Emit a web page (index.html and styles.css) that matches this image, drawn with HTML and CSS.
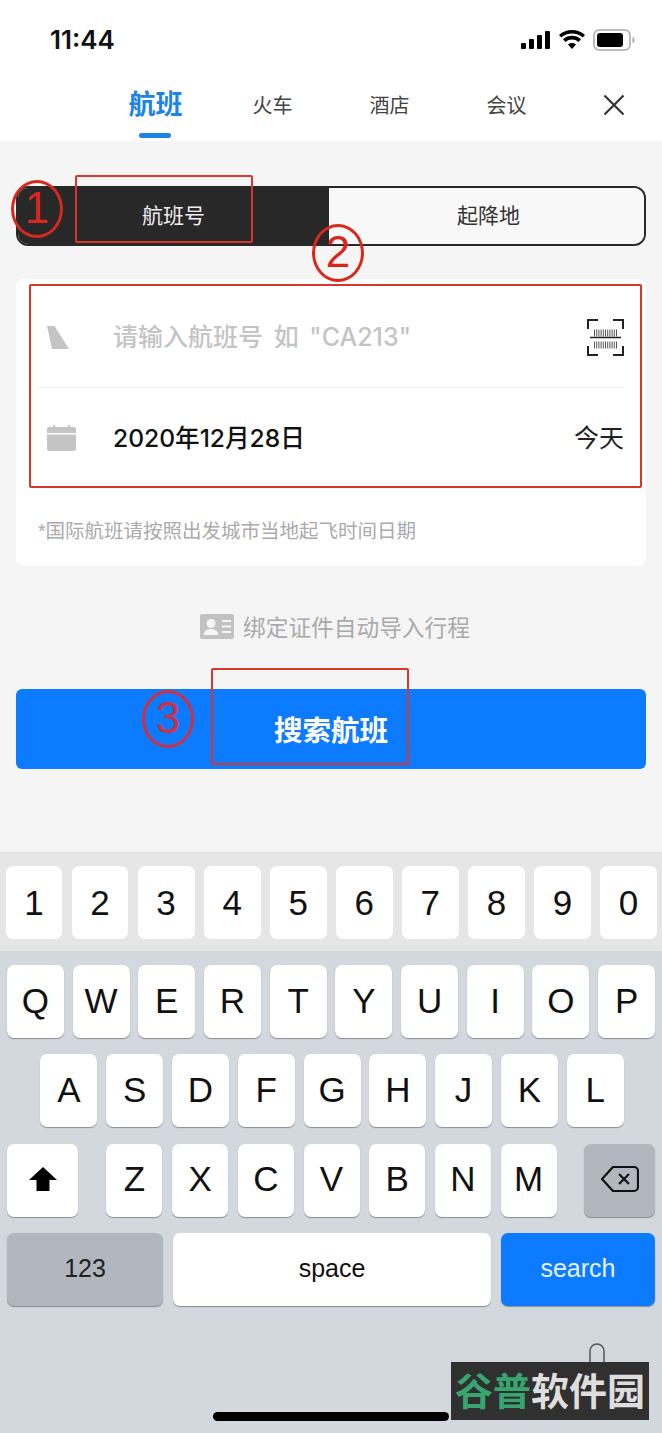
FILE: index.html
```html
<!DOCTYPE html>
<html>
	<head>
		<title>航班</title>
		<meta charset="utf-8">
		<meta name="viewport" content="width=device-width initial-scale=1">
		<link rel="stylesheet" href="styles.css">
	</head>
	<body>
		<div class="phone">
			<div class="statusBar">
				<span class="time">11:44</span>
				<div class="statusIcons">
					<svg width="30" height="20" viewBox="0 0 30 20"><rect x="0" y="13" width="5" height="6" rx="1"/><rect x="8" y="9" width="5" height="10" rx="1"/><rect x="16" y="5" width="5" height="14" rx="1"/><rect x="24" y="1" width="5" height="18" rx="1"/></svg>
					<svg width="26" height="20" viewBox="0 0 26 20"><path d="M13 19l-4-4.5c2.2-2 5.800-2 8 0zM6.500 12L4 9.300c5-4.600 13-4.600 18 0L19.500 12c-3.600-3.300-9.400-3.300-13 0zM2.300 7.500L0 5c7.200-6.600 18.800-6.600 26 0l-2.300 2.500C17.800 2.100 8.200 2.100 2.300 7.500z"/></svg>
					<svg width="42" height="22" viewBox="0 0 42 22"><rect x="1" y="1" width="36" height="20" rx="5" fill="none" stroke="#a8a8a8" stroke-width="1.500"/><rect x="4" y="4" width="26" height="14" rx="3"/><path d="M39.500 8v6c1.500-.5 2-1.500 2-3s-.5-2.500-2-3z" fill="#a8a8a8"/></svg>
				</div>
			</div>

			<div class="tabs">
				<div class="tab active">航班</div>
				<div class="tab">火车</div>
				<div class="tab">酒店</div>
				<div class="tab">会议</div>
				<svg class="closeIcon" width="22" height="22" viewBox="0 0 22 22"><path d="M1.500 1.500l19 19M20.500 1.500l-19 19" stroke="#333" stroke-width="2.200" fill="none"/></svg>
			</div>

			<div class="content">
				<div class="segment">
					<div class="segItem on">航班号</div>
					<div class="segItem">起降地</div>
				</div>

				<div class="card">
					<div class="row first">
						<svg class="rowIcon" width="24" height="24" viewBox="0 0 24 24"><path d="M0 1h7.500L22 24H5z" fill="#c4c4c4"/></svg>
						<span class="placeholder">请输入航班号 如 "CA213"</span>
						<svg class="scanIcon" width="37" height="37" viewBox="0 0 37 37">
							<path d="M1 10V1h10M26 1h10v9M1 27v9h10M26 36h10v-9" fill="none" stroke="#222" stroke-width="2"/>
							<path d="M7 12.500h23M7 24.500h23" stroke="#555" stroke-width="7" stroke-dasharray="1 1.200" fill="none" transform="translate(0 1.500)"/>
							<path d="M3 18.500h31" stroke="#222" stroke-width="1.500"/>
						</svg>
					</div>
					<div class="row">
						<svg class="rowIcon" width="29" height="26" viewBox="0 0 29 26"><rect x="0" y="2" width="29" height="24" rx="2" fill="#c4c4c4"/><rect x="0" y="8" width="29" height="1.500" fill="#fff"/><rect x="6" y="0" width="2" height="5" fill="#c4c4c4"/><rect x="21" y="0" width="2" height="5" fill="#c4c4c4"/></svg>
						<span class="dateText">2020年12月28日</span>
						<span class="today">今天</span>
					</div>
					<p class="hint">*国际航班请按照出发城市当地起飞时间日期</p>
				</div>

				<div class="bindLine">
					<svg width="34" height="25" viewBox="0 0 34 25"><rect width="34" height="25" rx="2" fill="#c2c2c2"/><circle cx="11" cy="9.500" r="4.500" fill="#f5f5f5"/><path d="M3.500 21c.5-4 3.500-6 7.500-6s7 2 7.500 6z" fill="#f5f5f5"/><path d="M22 7h9M22 12.500h9M22 18h9" stroke="#f5f5f5" stroke-width="2"/></svg>
					<span>绑定证件自动导入行程</span>
				</div>

				<div class="searchBtn">搜索航班</div>
			</div>

			<div class="numRow">
				<div class="key">1</div><div class="key">2</div><div class="key">3</div><div class="key">4</div><div class="key">5</div>
				<div class="key">6</div><div class="key">7</div><div class="key">8</div><div class="key">9</div><div class="key">0</div>
			</div>

			<div class="keyboard">
				<div class="keyRow">
					<div class="key">Q</div><div class="key">W</div><div class="key">E</div><div class="key">R</div><div class="key">T</div>
					<div class="key">Y</div><div class="key">U</div><div class="key">I</div><div class="key">O</div><div class="key">P</div>
				</div>
				<div class="keyRow midRow">
					<div class="key">A</div><div class="key">S</div><div class="key">D</div><div class="key">F</div><div class="key">G</div>
					<div class="key">H</div><div class="key">J</div><div class="key">K</div><div class="key">L</div>
				</div>
				<div class="keyRow spread">
					<div class="key wide">
						<svg width="30" height="26" viewBox="0 0 30 26"><path d="M15 1L29 14H21.500V25H8.500V14H1z"/></svg>
					</div>
					<div class="letters">
						<div class="key">Z</div><div class="key">X</div><div class="key">C</div><div class="key">V</div>
						<div class="key">B</div><div class="key">N</div><div class="key">M</div>
					</div>
					<div class="key wide gray">
						<svg width="38" height="28" viewBox="0 0 38 28"><path d="M12 2h21a4 4 0 0 1 4 4v16a4 4 0 0 1-4 4H12L1 14z" fill="none" stroke="#111" stroke-width="2.200" stroke-linejoin="round"/><path d="M18 9l10 10M28 9L18 19" stroke="#111" stroke-width="2.200"/></svg>
					</div>
				</div>
				<div class="keyRow spread">
					<div class="key numKey gray">123</div>
					<div class="key spaceKey">space</div>
					<div class="key searchKey">search</div>
				</div>
				<div class="homeBar"></div>
				<svg class="micIcon" width="32" height="56" viewBox="0 0 32 56"><rect x="9" y="1" width="14" height="34" rx="7" fill="none" stroke="#555" stroke-width="1.500"/><path d="M2 22c0 10 6 16 14 16s14-6 14-16M16 38v14" fill="none" stroke="#555" stroke-width="1.500"/></svg>
				<div class="watermark"><span class="green">谷普</span>软件园</div>
			</div>

			<!-- red marks drawn over the screenshot -->
			<div class="mark box1"></div>
			<div class="mark box2"></div>
			<div class="mark box3"></div>
			<div class="badge badge1">1</div>
			<div class="badge badge2">2</div>
			<div class="badge badge3">3</div>
		</div>
	</body>
</html>
```

FILE: styles.css
```css
* {box-sizing: border-box; font-family: "Liberation Sans", "Noto Sans CJK SC", sans-serif;}
html, body {margin: 0; padding: 0;}
.phone {position: relative; width: 662px; height: 1433px; overflow: hidden; background: #fff; display: flex; flex-direction: column;}

.statusBar {height: 70px; padding: 9px 27px 0 50px; display: flex; justify-content: space-between; align-items: center;}
.time {font-family: "Inter", sans-serif; font-size: 26px; font-weight: 600; color: #111;}
.statusIcons {display: flex; align-items: center; gap: 8px;}

.tabs {height: 71px; padding-left: 97px; display: flex; align-items: flex-start; position: relative;}
.tab {width: 117px; height: 71px; text-align: center; font-size: 20px; line-height: 30px; padding-top: 21px; color: #444; position: relative;}
.tab.active {font-size: 27px; font-weight: 700; color: #1b84e4; line-height: 40px; padding-top: 15px;}
.tab.active::after {content: ""; position: absolute; left: 42px; bottom: 3px; width: 32px; height: 5px; border-radius: 3px; background: #1b84e4;}
.closeIcon {margin-left: 38px; margin-top: 24px;}

.content {height: 712px; background: #f5f5f5; padding: 45px 16px 0; border-bottom: 1px solid #ddd;}
.segment {display: flex; height: 60px; border: 2px solid #282828; border-radius: 12px; overflow: hidden;}
.segItem {flex: 1; display: flex; align-items: center; justify-content: center; font-size: 21px; color: #333; background: #f8f8f8; padding: 0 0 4px 4px;}
.segItem.on {background: #282828; color: #eee; flex: 0 0 311px; padding-left: 0;}

.card {margin-top: 33px; height: 287px; background: #fff; border-radius: 8px; padding: 0 22px;}
.row {height: 100px; display: flex; align-items: center; position: relative;}
.row.first {height: 109px; border-bottom: 1px solid #eee; padding-top: 8px;}
.rowIcon {margin-left: 9px; flex: 0 0 auto;}
.placeholder {position: absolute; left: 75px; margin-top: -4px; font-family: "Inter", "Noto Sans CJK SC", sans-serif; font-size: 25px; font-weight: 500; color: #c4c4c4; word-spacing: 4px;}
.scanIcon {margin-left: auto;}
.dateText {position: absolute; left: 75px; margin-top: -5px; font-family: "Inter", "Noto Sans CJK SC", sans-serif; font-size: 24.600px; font-weight: 500; color: #111;}
.today {margin-left: auto; margin-top: -5px; font-size: 25px; color: #222;}
.hint {margin: 30px 0 0; font-size: 19.500px; line-height: 26px; color: #aaa;}

.bindLine {margin-top: 47px; padding-left: 8px; height: 26px; display: flex; align-items: center; justify-content: center; gap: 9px; font-size: 22.700px; color: #aaa;}
.searchBtn {margin-top: 50px; height: 80px; background: #0d7bff; border-radius: 6px; display: flex; align-items: center; justify-content: center; font-size: 28.500px; font-weight: 700; color: #fff; padding-bottom: 2px;}

.numRow {height: 98px; background: #e6e6e6; padding: 13px 5px 0 5.500px; display: flex; gap: 9.200px;}
.keyboard {flex: 1; position: relative; background: #d3d7de; padding-top: 14px; display: flex; flex-direction: column; gap: 16.330px;}
.keyRow {display: flex; justify-content: center; gap: 8.700px; height: 73px;}
.keyRow.midRow {padding-left: 2px; gap: 8.800px;}
.keyRow.spread {justify-content: space-between; padding: 0 7px;}
.letters {display: flex; gap: 9.700px; padding-left: 1px;}
.letters .key {width: 56px;}
.key {width: 57px; height: 73px; background: #fff; border-radius: 7px; display: flex; align-items: center; justify-content: center; font-size: 35px; color: #111;}
.keyboard .key {box-shadow: 0 1px 1px #8a8d92; padding-bottom: 2px;}
.numRow .key {border-radius: 7px;}
.key.wide {width: 71px;}
.key.gray {background: #b1b6bf;}
.key.numKey {width: 156px; font-size: 25px; color: #222;}
.key.spaceKey {width: 318px; font-size: 25px;}
.key.searchKey {width: 154px; font-size: 25px; background: #0d7bff; color: #e8f2ff;}

.homeBar {width: 236px; height: 9px; border-radius: 5px; background: #000; margin: 90px 0 0 213px;}
.micIcon {position: absolute; left: 581px; top: 392px;}
.watermark {position: absolute; left: 451px; top: 411px; width: 198px; height: 58px; background: #303030; color: #dedede; font-size: 38px; font-weight: 700; line-height: 60px; text-align: center; white-space: nowrap;}
.green {color: #37a56f;}

.mark {position: absolute; border: 2.500px solid #d8362c; border-radius: 2px;}
.box1 {left: 75px; top: 175px; width: 178px; height: 68px;}
.box2 {left: 29px; top: 284px; width: 613px; height: 204px;}
.box3 {left: 211px; top: 668px; width: 198px; height: 97px;}
.badge {position: absolute; width: 52px; height: 58px; border: 3.500px solid #d8281e; border-radius: 50%; color: #d8281e; font-size: 44px; line-height: 50px; text-align: center;}
.badge1 {left: 11px; top: 180px;}
.badge2 {left: 312px; top: 224px;}
.badge3 {left: 142px; top: 690px; color: #cf3040; border-color: #cf3040;}
```
